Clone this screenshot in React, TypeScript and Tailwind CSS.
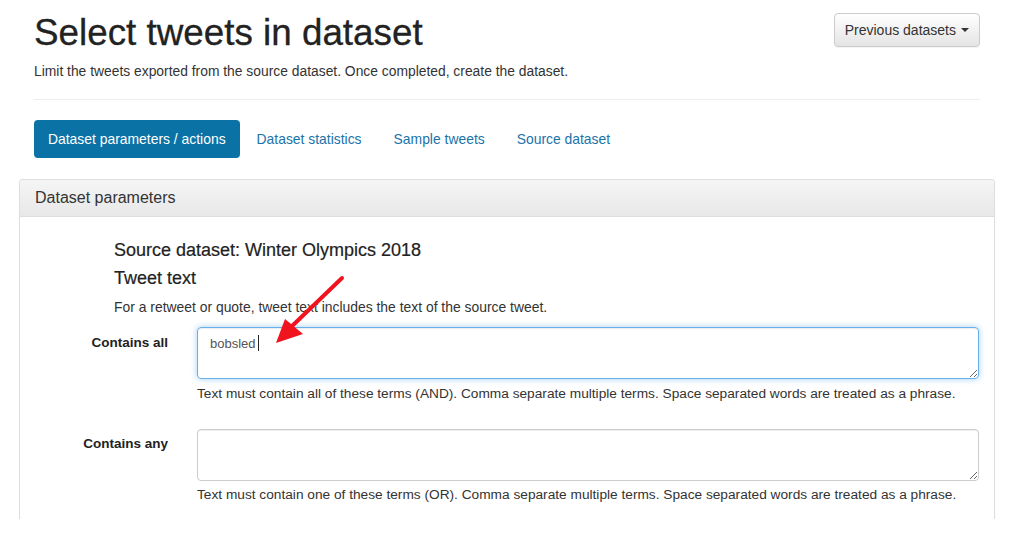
const tabs = ["Dataset statistics", "Sample tweets", "Source dataset"];

const App = () => {
  return (
    <div className="relative w-[1013px] h-[548px] overflow-hidden bg-white text-[#333] font-['Liberation_Sans',Arial,sans-serif]">
      <div className="ml-[34px] w-[946px]">
        {/* page header */}
        <div className="flex justify-between items-start">
          <div className="pt-[13px]">
            <h1 className="text-[36.8px] leading-[40px] text-[#222] [-webkit-text-stroke:0.3px_#222]">Select tweets in dataset</h1>
            <p className="mt-[9px] text-[13.85px] leading-[18px]">
              Limit the tweets exported from the source dataset. Once completed, create the dataset.
            </p>
          </div>
          <button className="mt-[13px] h-[34px] px-[10px] flex items-center gap-[5px] rounded-[4px] border border-[#ccc] bg-gradient-to-b from-white to-[#e4e4e4] text-[14px] text-[#333] shadow-[0_1px_1px_rgba(0,0,0,0.05)]">
            Previous datasets
            <span className="w-0 h-0 border-x-[4px] border-x-transparent border-t-[4px] border-t-[#333]" />
          </button>
        </div>
        <div className="mt-[19px] border-t border-[#eee]" />

        {/* tabs */}
        <div className="mt-[20px] flex gap-[2px] text-[13.9px]">
          <div className="h-[38px] pt-px px-[14px] flex items-center rounded-[4px] bg-[#0b72a5] text-white">
            Dataset parameters / actions
          </div>
          {tabs.map((t) => (
            <div key={t} className="h-[38px] pt-px px-[15px] flex items-center text-[#1a73a9]">
              {t}
            </div>
          ))}
        </div>

        {/* panel */}
        <div className="mt-[21px] -mx-[15px] border border-b-0 border-[#ddd] rounded-t-[4px]">
          <div className="h-[37px] px-[15px] flex items-center border-b border-[#ddd] rounded-t-[3px] bg-gradient-to-b from-[#f5f5f5] to-[#e8e8e8] text-[16px] text-[#333]">
            Dataset parameters
          </div>
          <div className="pt-[23px] pb-[15px] pr-[15px]">
            <div className="ml-[94px]">
              <h4 className="text-[18px] leading-[20px] text-[#222] [-webkit-text-stroke:0.2px_#222]">Source dataset: Winter Olympics 2018</h4>
              <h4 className="mt-[8px] text-[18px] leading-[20px] text-[#222] [-webkit-text-stroke:0.2px_#222]">Tweet text</h4>
              <p className="mt-[10px] text-[13.9px] leading-[18px]">
                For a retweet or quote, tweet text includes the text of the source tweet.
              </p>
            </div>

            {/* contains all */}
            <div className="mt-[11px] flex">
              <label className="w-[148px] pt-[7px] text-right text-[13.5px] leading-[18px] font-bold text-[#222]">
                Contains all
              </label>
              <div className="ml-[29px] flex-1">
                <div className="relative">
                  <textarea
                    readOnly
                    defaultValue="bobsled"
                    className="block w-full h-[52px] px-[12px] py-[7px] rounded-[4px] border border-[#66afe9] text-[13px] leading-[18px] text-[#555] outline-none shadow-[inset_0_1px_1px_rgba(0,0,0,0.075),0_0_6px_rgba(102,175,233,0.6)]"
                  />
                  <span className="absolute left-[61px] top-[8px] w-px h-[16px] bg-[#222]" />
                </div>
                <p className="mt-[6px] text-[13.7px] leading-[18px]">
                  Text must contain all of these terms (AND). Comma separate multiple terms. Space separated words are treated as a phrase.
                </p>
              </div>
            </div>

            {/* contains any */}
            <div className="mt-[26px] flex">
              <label className="w-[148px] pt-[6px] text-right text-[13.5px] leading-[18px] font-bold text-[#222]">
                Contains any
              </label>
              <div className="ml-[29px] flex-1">
                <textarea
                  readOnly
                  className="block w-full h-[52px] px-[12px] py-[7px] rounded-[4px] border border-[#ccc] text-[13px] leading-[18px] text-[#555] outline-none shadow-[inset_0_1px_1px_rgba(0,0,0,0.075)]"
                />
                <p className="mt-[5px] text-[13.7px] leading-[18px]">
                  Text must contain one of these terms (OR). Comma separate multiple terms. Space separated words are treated as a phrase.
                </p>
              </div>
            </div>
          </div>
        </div>
      </div>

      {/* annotation arrow */}
      <svg className="absolute left-0 top-0 pointer-events-none" width="1013" height="548">
        <line x1="342" y1="278" x2="290" y2="328" stroke="#f0141e" strokeWidth="4" strokeLinecap="round" />
        <polygon points="276,343 285,319 303,334" fill="#f0141e" />
      </svg>
    </div>
  );
};

export default App;
